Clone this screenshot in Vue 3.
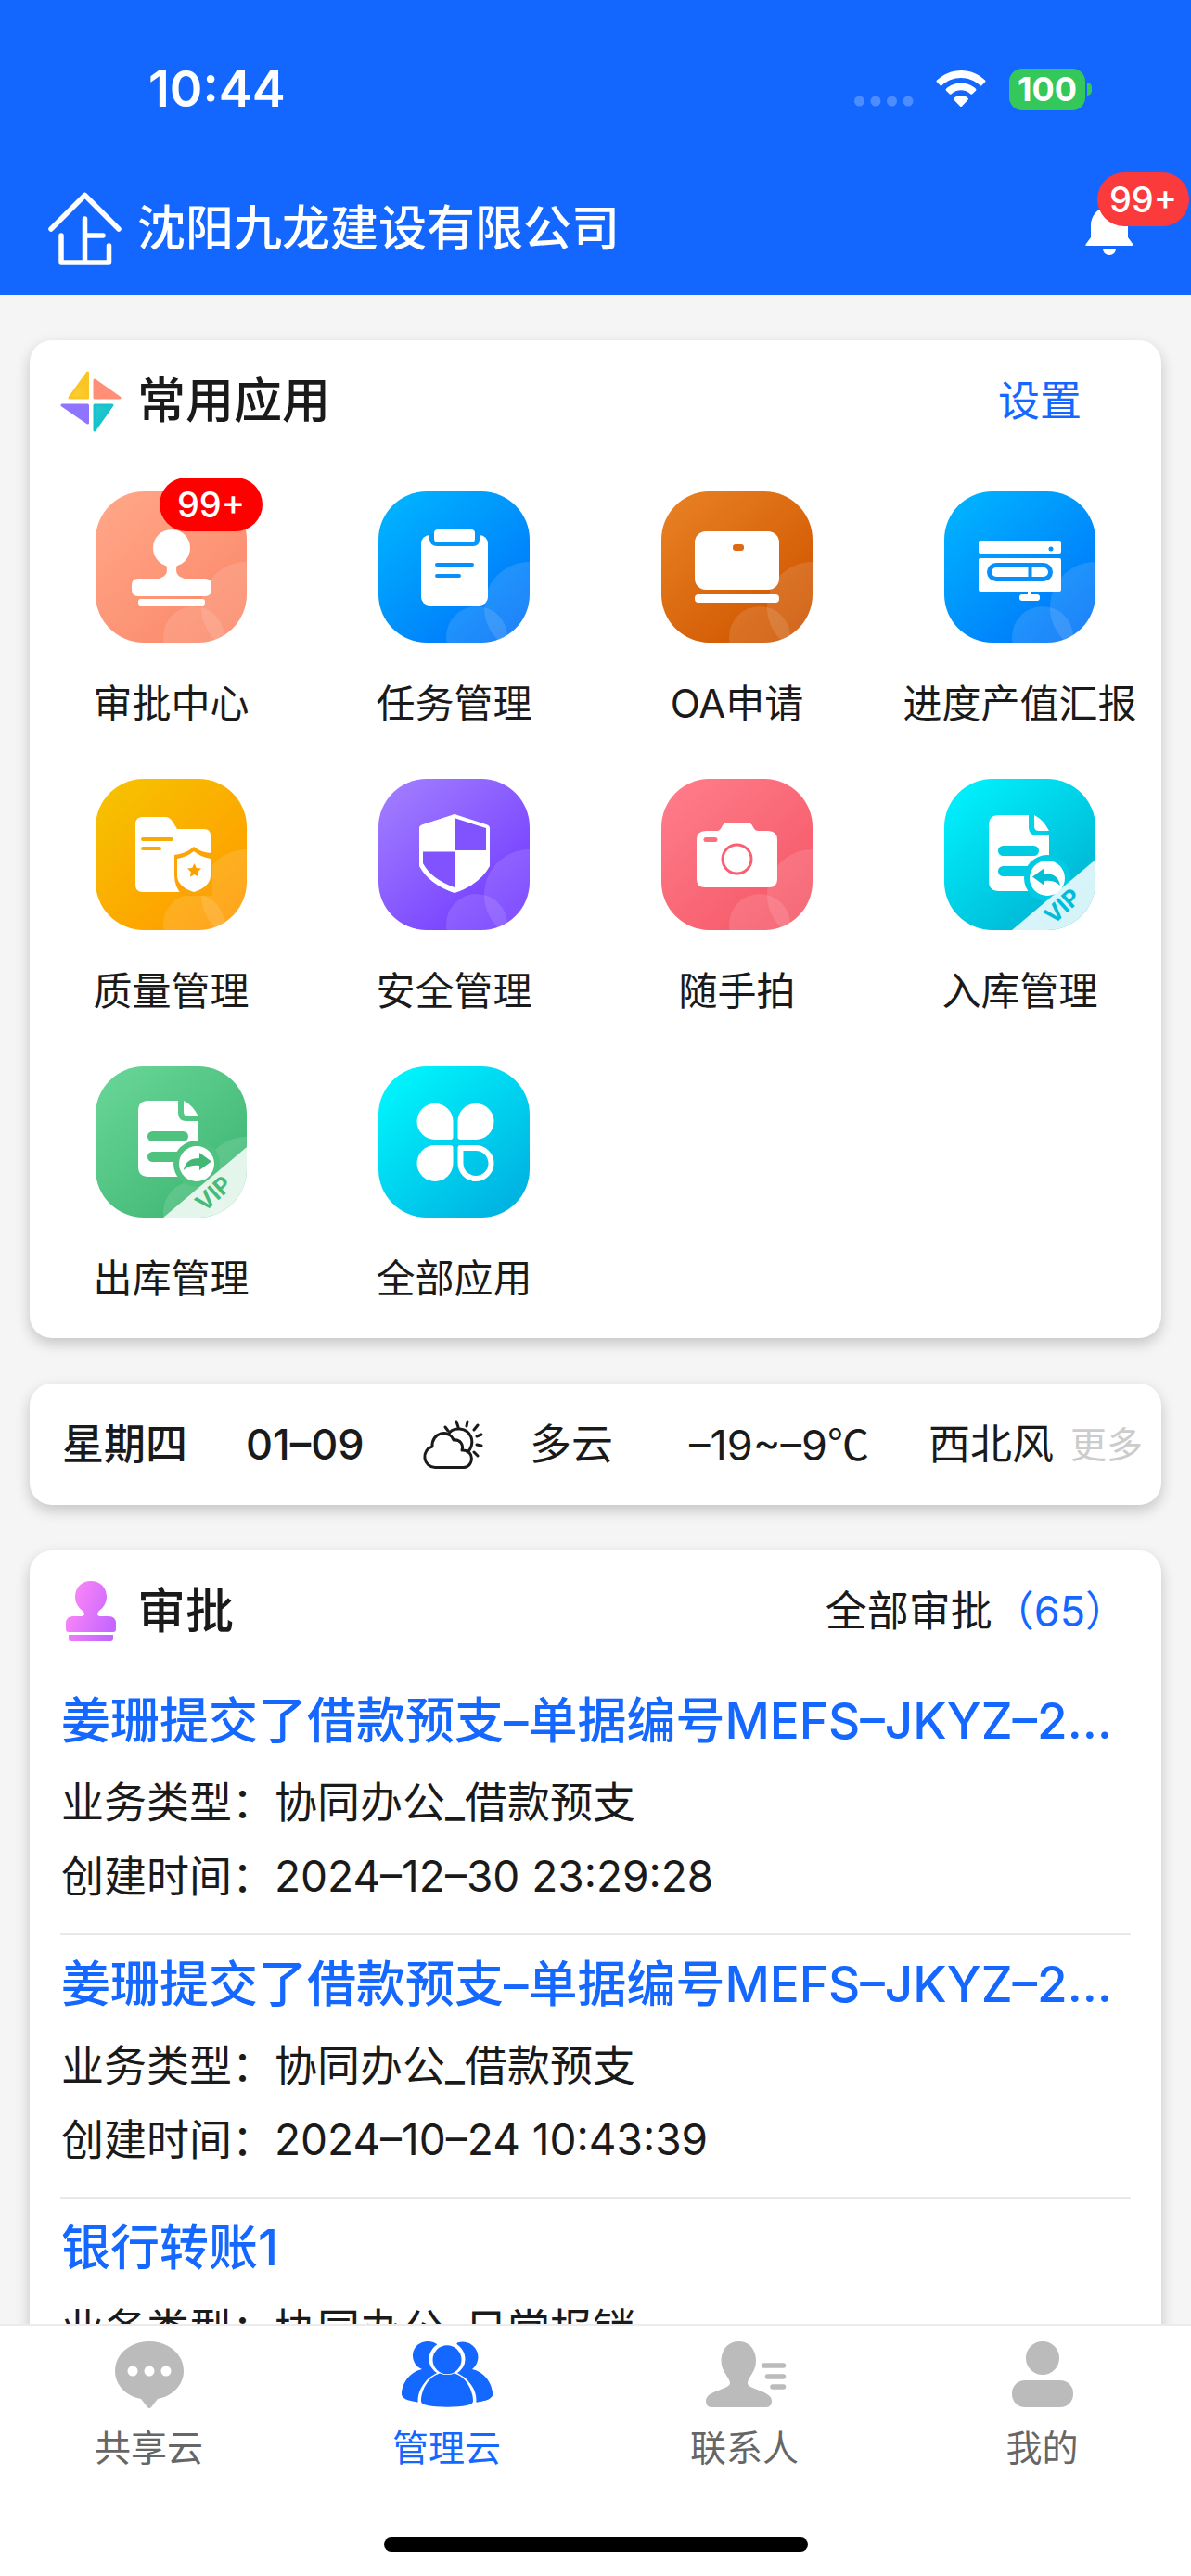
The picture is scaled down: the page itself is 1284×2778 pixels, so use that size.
<script setup>
const apps = [
  { name: '审批中心', icon: 'stamp', from: '#ffa788', to: '#fb8a6b', badge: '99+' },
  { name: '任务管理', icon: 'task', from: '#00b6ff', to: '#0076fa' },
  { name: 'OA申请', icon: 'laptop', from: '#e98124', to: '#cf5600' },
  { name: '进度产值汇报', icon: 'report', from: '#00b6ff', to: '#0076fa' },
  { name: '质量管理', icon: 'folder', from: '#f6c300', to: '#ff9c00' },
  { name: '安全管理', icon: 'shield', from: '#a27fff', to: '#733cff' },
  { name: '随手拍', icon: 'camera', from: '#ff7d8b', to: '#f55968' },
  { name: '入库管理', icon: 'docIn', from: '#00f4ff', to: '#00b2d2', vip: true },
  { name: '出库管理', icon: 'docOut', from: '#69d698', to: '#3fb673', vip: true },
  { name: '全部应用', icon: 'grid', from: '#00f9ff', to: '#00b4e2' },
].map((a, i) => ({ ...a, id: 'bg' + i }))

const approvals = [
  { title: '姜珊提交了借款预支–单据编号MEFS–JKYZ–20241230001', type: '协同办公_借款预支', time: '2024–12–30 23:29:28' },
  { title: '姜珊提交了借款预支–单据编号MEFS–JKYZ–20241024001', type: '协同办公_借款预支', time: '2024–10–24 10:43:39' },
  { title: '银行转账1', type: '协同办公_日常报销', time: '2024–10–22 09:12:05' },
]

const tabs = [
  { name: '共享云', icon: 'chat' },
  { name: '管理云', icon: 'team', active: true },
  { name: '联系人', icon: 'contact' },
  { name: '我的', icon: 'me' },
]
</script>

<template>
  <div class="screen">
    <header class="top">
      <div class="status">
        <span class="clock">10:44</span>
        <div class="status-icons">
          <svg class="signal" viewBox="0 0 64 12" width="64" height="12">
            <circle v-for="n in 4" :key="n" :cx="n * 17.5 - 12" cy="6" r="5.5" fill="#fff" opacity=".25" />
          </svg>
          <svg class="wifi" viewBox="0 0 54 42" width="54" height="42" fill="#fff">
            <path d="M27 1C17 1 8 5 1 11.500q-1 1 0 2l3.500 3.500q1 1 2 0C12 12 19 9 27 9s15 3 20.500 8q1 1 2 0L53 13.500q1-1 0-2C46 5 37 1 27 1z" />
            <path d="M27 14.500c-6 0-12 2.500-16 6.200q-1 1 0 2l3.700 3.600q1 1 2 0c3-2.500 6.300-4 10.300-4s7.300 1.500 10.300 4q1 1 2 0l3.700-3.600q1-1 0-2c-4-3.700-10-6.200-16-6.200z" />
            <path d="M27 28c-3 0-5.500 1-7.500 2.700q-1 1 0 2l6.500 6.800q1 1 2 0l6.500-6.800q1-1 0-2C32.500 29 30 28 27 28z" />
          </svg>
          <span class="battery">100</span>
          <span class="battery-nub"></span>
        </div>
      </div>
      <div class="nav">
        <svg viewBox="0 0 79 80" width="79" height="80" fill="none" stroke="#fff" stroke-width="5.500" stroke-linecap="round" stroke-linejoin="round">
          <path d="M3 40 39.500 3.500 76 40M39.500 29v47M39.500 47H59M14 47v29h51.500V58" />
        </svg>
        <h1>沈阳九龙建设有限公司</h1>
        <button class="bell" aria-label="消息">
          <svg viewBox="0 0 52 56" width="52" height="56" fill="#fff">
            <path d="M26 0c2.500 0 4 1.500 4 4 9 2 16 10 16 20v13l5.500 7.500Q52.500 46 50 46H2q-2.500 0-1.500-1.500L6 37V24C6 14 13 6 22 4c0-2.500 1.500-4 4-4z" />
            <path d="M19 49h14c0 4-3 7-7 7s-7-3-7-7z" />
          </svg>
          <span class="badge bell-badge">99+</span>
        </button>
      </div>
    </header>

    <main class="content">
      <section class="card">
        <div class="card-head">
          <svg class="head-icon" viewBox="0 0 66 66" width="66" height="66" stroke-width="3" stroke-linejoin="round">
            <defs>
              <linearGradient id="kYellow" x1="0" y1="1" x2="1" y2="0"><stop stop-color="#fbd43a" /><stop offset="1" stop-color="#fbbd18" /></linearGradient>
              <linearGradient id="kTeal" x1="0" y1="0" x2="1" y2="1"><stop stop-color="#2ec8cf" /><stop offset="1" stop-color="#00bcc8" /></linearGradient>
            </defs>
            <path d="M29.500 2v27H10z" fill="url(#kYellow)" stroke="#fbc525" />
            <path d="M37 10v19h27z" fill="#ff9077" stroke="#ff9077" />
            <path d="M2 37h27.500v19z" fill="#8f74ff" stroke="#8f74ff" />
            <path d="M37 37h19L37 64z" fill="url(#kTeal)" stroke="#16c2cb" />
          </svg>
          <h2>常用应用</h2>
          <a class="head-link blue settings" href="#settings">设置</a>
        </div>

        <div class="apps">
          <button v-for="app in apps" :key="app.name" class="app">
            <span class="tile">
              <svg viewBox="0 0 163 163" width="163" height="163">
                <defs>
                  <linearGradient :id="app.id" x1="0" y1="0.050" x2="0.800" y2="0.950">
                    <stop :stop-color="app.from" /><stop offset="1" :stop-color="app.to" />
                  </linearGradient>
                  <clipPath :id="app.id + 'c'"><rect width="163" height="163" rx="52" /></clipPath>
                </defs>
                <g :clip-path="`url(#${app.id}c)`">
                  <rect width="163" height="163" :fill="`url(#${app.id})`" />
                  <g v-if="app.icon !== 'grid' && app.icon !== 'docIn'" fill="#fff" fill-opacity=".12">
                    <circle cx="163" cy="125" r="49" /><circle cx="106" cy="157" r="33" />
                  </g>

                  <g v-if="app.icon === 'stamp'" fill="#fff">
                    <ellipse cx="82" cy="61" rx="20" ry="20" />
                    <path d="M76 79h12q-4 12 8 15h22q7 0 7 7v5q0 7-7 7H46q-7 0-7-7v-5q0-7 7-7h22q12-3 8-15z" />
                    <rect x="46" y="116" width="72" height="7" rx="3" />
                  </g>

                  <g v-else-if="app.icon === 'task'">
                    <rect x="46" y="47" width="72" height="76" rx="9" fill="#fff" />
                    <path d="M55 45h54v7q0 7-7 7H63q-7 0-8-7z" fill="#0697fb" />
                    <rect x="60" y="41" width="44" height="14" rx="4" fill="#fff" />
                    <path d="M63 79h38M63 91h24" stroke="#078ffb" stroke-width="4" stroke-linecap="round" />
                  </g>

                  <g v-else-if="app.icon === 'laptop'" fill="#fff">
                    <rect x="36" y="43" width="91" height="63" rx="12" />
                    <rect x="77" y="57" width="12" height="7" rx="3" fill="#dd6a12" />
                    <rect x="36" y="111" width="91" height="9" rx="4" />
                  </g>

                  <g v-else-if="app.icon === 'report'" fill="#fff">
                    <rect x="37" y="53" width="89" height="14" rx="2" />
                    <circle cx="115" cy="62" r="2.500" fill="#078ffb" />
                    <rect x="37" y="72" width="89" height="36" rx="2" />
                    <rect x="48.500" y="79.500" width="66" height="15" rx="7.500" fill="none" stroke="#078ffb" stroke-width="5" />
                    <path d="M92.500 79v16" stroke="#078ffb" stroke-width="4" />
                    <path d="M90 107h4v8h-4z" /><rect x="81" y="111" width="22" height="7" rx="3" />
                  </g>

                  <g v-else-if="app.icon === 'folder'" fill="#fff">
                    <path d="M51 41h24q5 0 8 5l5 8h29q7 0 7 7v56q0 5-5 5H51q-8 0-8-8V49q0-8 8-8z" />
                    <path d="M51 65h31M51 75h18" stroke="#faaa04" stroke-width="4" stroke-linecap="round" />
                    <path d="M106 73q8 7 20 7v46H94q-9-9-9-22V82q12-1 21-9z" fill="#fca407" />
                    <path d="M106 78q7 6 18 8v18q0 12-18 18-18-6-18-18V86q11-2 18-8z" />
                    <path d="m106.500 91 2.300 5 5.200.6-3.800 3.700 1 5.400-4.700-2.700-4.700 2.700 1-5.400-3.800-3.700 5.200-.6z" fill="#fba000" />
                  </g>

                  <g v-else-if="app.icon === 'shield'">
                    <path d="M82 38q1 0 3 1l31 10q4 1 4 4v41q-11 20-38 29-27-9-38-29V53q0-3 4-4l31-10q2-1 3-1z" fill="#fff" />
                    <path d="M83 42.500 116 53v24H83zM48 78.500h34V117q-25-9-34-26z" fill="#8153ff" />
                  </g>

                  <g v-else-if="app.icon === 'camera'">
                    <path d="M60 56q3 0 5-4 2-5 7-5h20q5 0 7 5 2 4 5 4h11q10 0 10 10v42q0 9-9 9H47q-9 0-9-9V66q0-10 10-10z" fill="#fff" />
                    <circle cx="81.500" cy="86.500" r="15.500" fill="none" stroke="#f95f70" stroke-width="3" />
                    <path d="M48 65.500h10" stroke="#fb6f7e" stroke-width="5" stroke-linecap="round" />
                  </g>

                  <g v-else-if="app.icon === 'docIn' || app.icon === 'docOut'" :transform="app.icon === 'docOut' ? 'translate(-2 -2)' : null" fill="#fff">
                    <path d="M59 39h32v13q0 9 9 9h13v60H59q-11 0-11-11V50q0-11 11-11z" />
                    <path d="M97 39q10 5 16 17h-11q-5 0-5-5z" />
                    <g :fill="app.icon === 'docIn' ? '#00cbe2' : '#4fc280'">
                      <rect x="58" y="72" width="44" height="11" rx="5.500" />
                      <rect x="58" y="94" width="50" height="11" rx="5.500" />
                      <circle cx="111" cy="107" r="25" />
                    </g>
                    <circle cx="111" cy="107" r="19" />
                    <path
                      :transform="app.icon === 'docOut' ? 'matrix(-1 0 0 1 222 -1)' : null"
                      d="M95 105.500 108 96v6q15 0 17 13-6-6-17-5v5z"
                      :fill="app.icon === 'docIn' ? '#00bfd6' : '#41b874'"
                    />
                  </g>

                  <g v-else-if="app.icon === 'grid'" fill="#fff">
                    <path d="M61 40a19.500 19.500 0 0 1 19.500 19.500V76q0 3-3 3H61a19.500 19.500 0 0 1 0-39z" />
                    <path d="M105 40a19.500 19.500 0 0 1 0 39H88.500q-3 0-3-3V59.500A19.500 19.500 0 0 1 105 40z" />
                    <path d="M61 85h16.500q3 0 3 3v16.500A19.500 19.500 0 1 1 61 85z" />
                    <path d="M88.500 88H105a16.500 16.500 0 1 1-16.500 16.500z" fill="none" stroke="#fff" stroke-width="6" stroke-linejoin="round" />
                  </g>

                  <path v-if="app.vip" d="M163 87v76H73z" fill="#fff" fill-opacity=".84" />
                </g>
                <text
                  v-if="app.vip" x="127" y="146" transform="rotate(-42 127 137)" text-anchor="middle" class="vip"
                  :fill="app.icon === 'docIn' ? '#00bcd8' : '#45bb78'"
                >VIP</text>
              </svg>
              <span v-if="app.badge" class="badge app-badge">{{ app.badge }}</span>
            </span>
            <span class="app-name">{{ app.name }}</span>
          </button>
        </div>
      </section>

      <section class="card weather">
        <strong>星期四</strong>
        <strong>01–09</strong>
        <svg viewBox="0 0 66 54" width="66" height="54" fill="none" stroke="#1a1a1a" stroke-width="3" stroke-linecap="round" stroke-linejoin="round">
          <path d="M14 51.500a11.500 11.500 0 0 1-3-22.500 C10 14 29 9 34 22c7-1 11 5 9 11 14-1 13 18 2 18.500z" />
          <path d="M28 16c5-9 21-8 25 3 2 6 0 13-4 16" />
          <path d="m25 8 3 4M37 2l2 6M49 2l-1 5M60 6l-4 5M64 16l-5 2M64 28l-5-1M60 39l-4-4" />
        </svg>
        <span>多云</span>
        <span>–19~–9<span class="unit">℃</span></span>
        <span>西北风</span>
        <a class="more" href="#weather">更多</a>
      </section>

      <section class="card approvals">
        <div class="card-head">
          <svg class="head-icon" viewBox="0 0 66 66" width="66" height="66" fill="url(#stampFill)">
            <defs>
              <linearGradient id="stampFill" gradientUnits="userSpaceOnUse" x1="6" y1="20" x2="60" y2="40"><stop stop-color="#ff88f6" /><stop offset="1" stop-color="#c466ff" /></linearGradient>
            </defs>
            <path d="M33 0c10 0 17 7 17 17 0 7-4 12-8 15-3 3-2 6 1 6h9q8 0 8 8v6q0 3-3 3H9q-3 0-3-3v-6q0-8 8-8h9c3 0 4-3 1-6-4-3-8-8-8-15C16 7 23 0 33 0z" />
            <path d="M9 58h48v4q0 3-3 3H12q-3 0-3-3z" />
          </svg>
          <h2>审批</h2>
          <a class="head-link all" href="#approvals">全部审批<span class="blue">（65）</span></a>
        </div>
        <ul>
          <li v-for="item in approvals" :key="item.time">
            <a class="item-title blue" :href="'#' + item.time">{{ item.title }}</a>
            <p>业务类型：{{ item.type }}</p>
            <p>创建时间：{{ item.time }}</p>
          </li>
        </ul>
      </section>
    </main>

    <nav class="tabbar">
      <div class="tabs">
        <button v-for="tab in tabs" :key="tab.name" class="tab" :class="{ active: tab.active }">
          <svg viewBox="0 0 100 72" width="100" height="72" fill="currentColor">
            <g v-if="tab.icon === 'chat'">
              <path d="M50 0c21 0 37 14 37 32 0 15-12 27-28 30l-7 9q-2 2-4 0l-7-9C25 59 13 47 13 32 13 14 29 0 50 0z" />
              <circle v-for="x in [32, 50, 68]" :key="x" :cx="x" cy="32" r="5.500" fill="#fff" />
            </g>
            <g v-else-if="tab.icon === 'team'">
              <path d="M29 0a15.500 15.500 0 0 0-6 30C9 33 1 46 1 57q0 6 17 8.500L50 50l32 15.500Q99 63 99 57 99 46 77 30a15.500 15.500 0 1 0-20-26L50 12 40 4Q36 0 29 0z" />
              <path d="M77 30c14 3 22 16 22 27q0 6-17 8.500V40z" />
              <path d="M39.500 0h21v5h-21z" fill="#fff" />
              <path d="M42 34.500q-10-6-10-15a18 18 0 0 1 36 0q0 9-10 15c15 6 22 19 22 29q0 8-30 8t-30-8c0-10 7-23 22-29z" fill="#fff" stroke="#fff" stroke-width="3" />
              <circle cx="50" cy="19.700" r="15.500" />
              <path d="M42 34.500q8 3 16 0c13 4 20 19 20 30q0 6-28 6.200-28-.2-28-6.200c0-11 7-26 20-30z" />
            </g>
            <g v-else-if="tab.icon === 'contact'">
              <path d="M43.500 0C55 0 62 9 62 21c0 12-9 18-9 24 0 7 26 8 26 19 0 4-2 7-6 7H14c-4 0-6-3-6-7 0-11 26-12 26-19 0-6-9.500-12-9.500-24C24.500 9 32 0 43.500 0z" />
              <path d="M70.500 26h21M74.500 38h17M80 49h11.500" stroke="currentColor" stroke-width="5.500" stroke-linecap="round" />
            </g>
            <g v-else>
              <circle cx="50" cy="18" r="18" />
              <rect x="17" y="42" width="66" height="29" rx="14" />
            </g>
          </svg>
          <span>{{ tab.name }}</span>
        </button>
      </div>
      <div class="home-bar"></div>
    </nav>
  </div>
</template>

<style>
body { background: #f5f5f5; }
</style>

<style scoped>
* { box-sizing: border-box; }
.screen {
  display: flex;
  flex-direction: column;
  height: 100vh;
  background: #f5f5f5;
  color: #1a1a1a;
  font-family: Inter, "Noto Sans CJK SC", sans-serif;
}
h1, h2, p, ul { margin: 0; padding: 0; }
ul { list-style: none; }
button { border: 0; padding: 0; background: none; font: inherit; color: inherit; }
a { color: inherit; text-decoration: none; }
svg { display: block; flex: none; }
.blue { color: #1467ff; }

.top { flex: none; background: #1367ff; color: #fff; }
.status {
  display: flex;
  align-items: center;
  justify-content: space-between;
  height: 175px;
  padding: 17px 107px 0 160px;
}
.clock { font-size: 54px; font-weight: 600; line-height: 60px; }
.status-icons { display: flex; align-items: center; }
.signal { margin: 26px 24px 0 0; }
.wifi { margin-right: 25px; }
.battery {
  width: 82px;
  border-radius: 14px;
  background: #34c759;
  font-size: 36px;
  font-weight: 700;
  line-height: 45px;
  text-align: center;
}
.battery-nub { width: 5px; height: 14px; margin-left: 2px; border-radius: 0 5px 5px 0; background: #34c759; }
.nav { display: flex; align-items: center; height: 143px; padding: 0 62px 0 52px; }
h1 { flex: 1; margin-left: 17px; font-size: 52px; font-weight: 500; line-height: 60px; }
.bell { position: relative; }
.badge {
  position: absolute;
  border-radius: 29px;
  color: #fff;
  font-size: 38px;
  font-weight: 500;
  line-height: 58px;
  text-align: center;
}
.bell-badge { left: 13px; top: -33px; width: 99px; background: #fb3a3b; }
.app-badge { left: 69px; top: -15px; width: 111px; background: #f00; }

.content { flex: 1; min-height: 0; overflow: hidden; padding: 49px 32px 0; }
.card { margin-bottom: 49px; border-radius: 24px; background: #fff; box-shadow: 0 6px 15px rgba(0, 0, 0, .2); }
.card-head { display: flex; align-items: center; height: 131px; padding: 0 33px; }
h2 { flex: 1; margin-left: 17px; font-size: 52px; font-weight: 500; line-height: 60px; }
.head-link { font-size: 45px; line-height: 60px; }
.settings { margin-right: 53px; }
.all { margin-right: 4px; }
.apps { display: grid; grid-template-columns: repeat(4, 1fr); padding-bottom: 15px; }
.app { display: flex; flex-direction: column; align-items: center; height: 310px; padding-top: 32px; }
.tile { position: relative; }
.app-name { margin-top: 36px; font-size: 42px; line-height: 60px; white-space: nowrap; }
.vip { font-size: 25px; font-weight: 700; }

.weather {
  display: grid;
  grid-template-columns: 198px 190px 116px 172px 258px 153px 1fr;
  align-items: center;
  height: 131px;
  padding-left: 35px;
  font-size: 45px;
  line-height: 60px;
  white-space: nowrap;
}
.weather strong { font-weight: 500; }
.unit { font-family: "Noto Sans CJK SC", sans-serif; }
.more { color: #ccc; font-size: 39px; }

.approvals li { margin: 0 33px; padding: 13px 0 22px; border-bottom: 2px solid #e8e8e8; }
.item-title {
  display: block;
  margin: 0 12px 7px 1px;
  overflow: hidden;
  font-size: 53px;
  font-weight: 500;
  line-height: 80px;
  text-overflow: ellipsis;
  white-space: nowrap;
}
.approvals p { padding-left: 1px; font-size: 46px; line-height: 80px; }

.tabbar { flex: none; border-top: 2px solid #ebebeb; background: #fff; }
.tabs { display: grid; grid-template-columns: repeat(4, 1fr); height: 228px; }
.tab { display: flex; flex-direction: column; align-items: center; padding-top: 17px; color: #bbb; font-size: 39px; line-height: 60px; }
.tab span { margin-top: 13px; color: #666; }
.tab.active, .tab.active span { color: #1467ff; }
.home-bar { width: 457px; height: 16px; margin: 0 auto 26px; border-radius: 8px; background: #000; }
</style>
